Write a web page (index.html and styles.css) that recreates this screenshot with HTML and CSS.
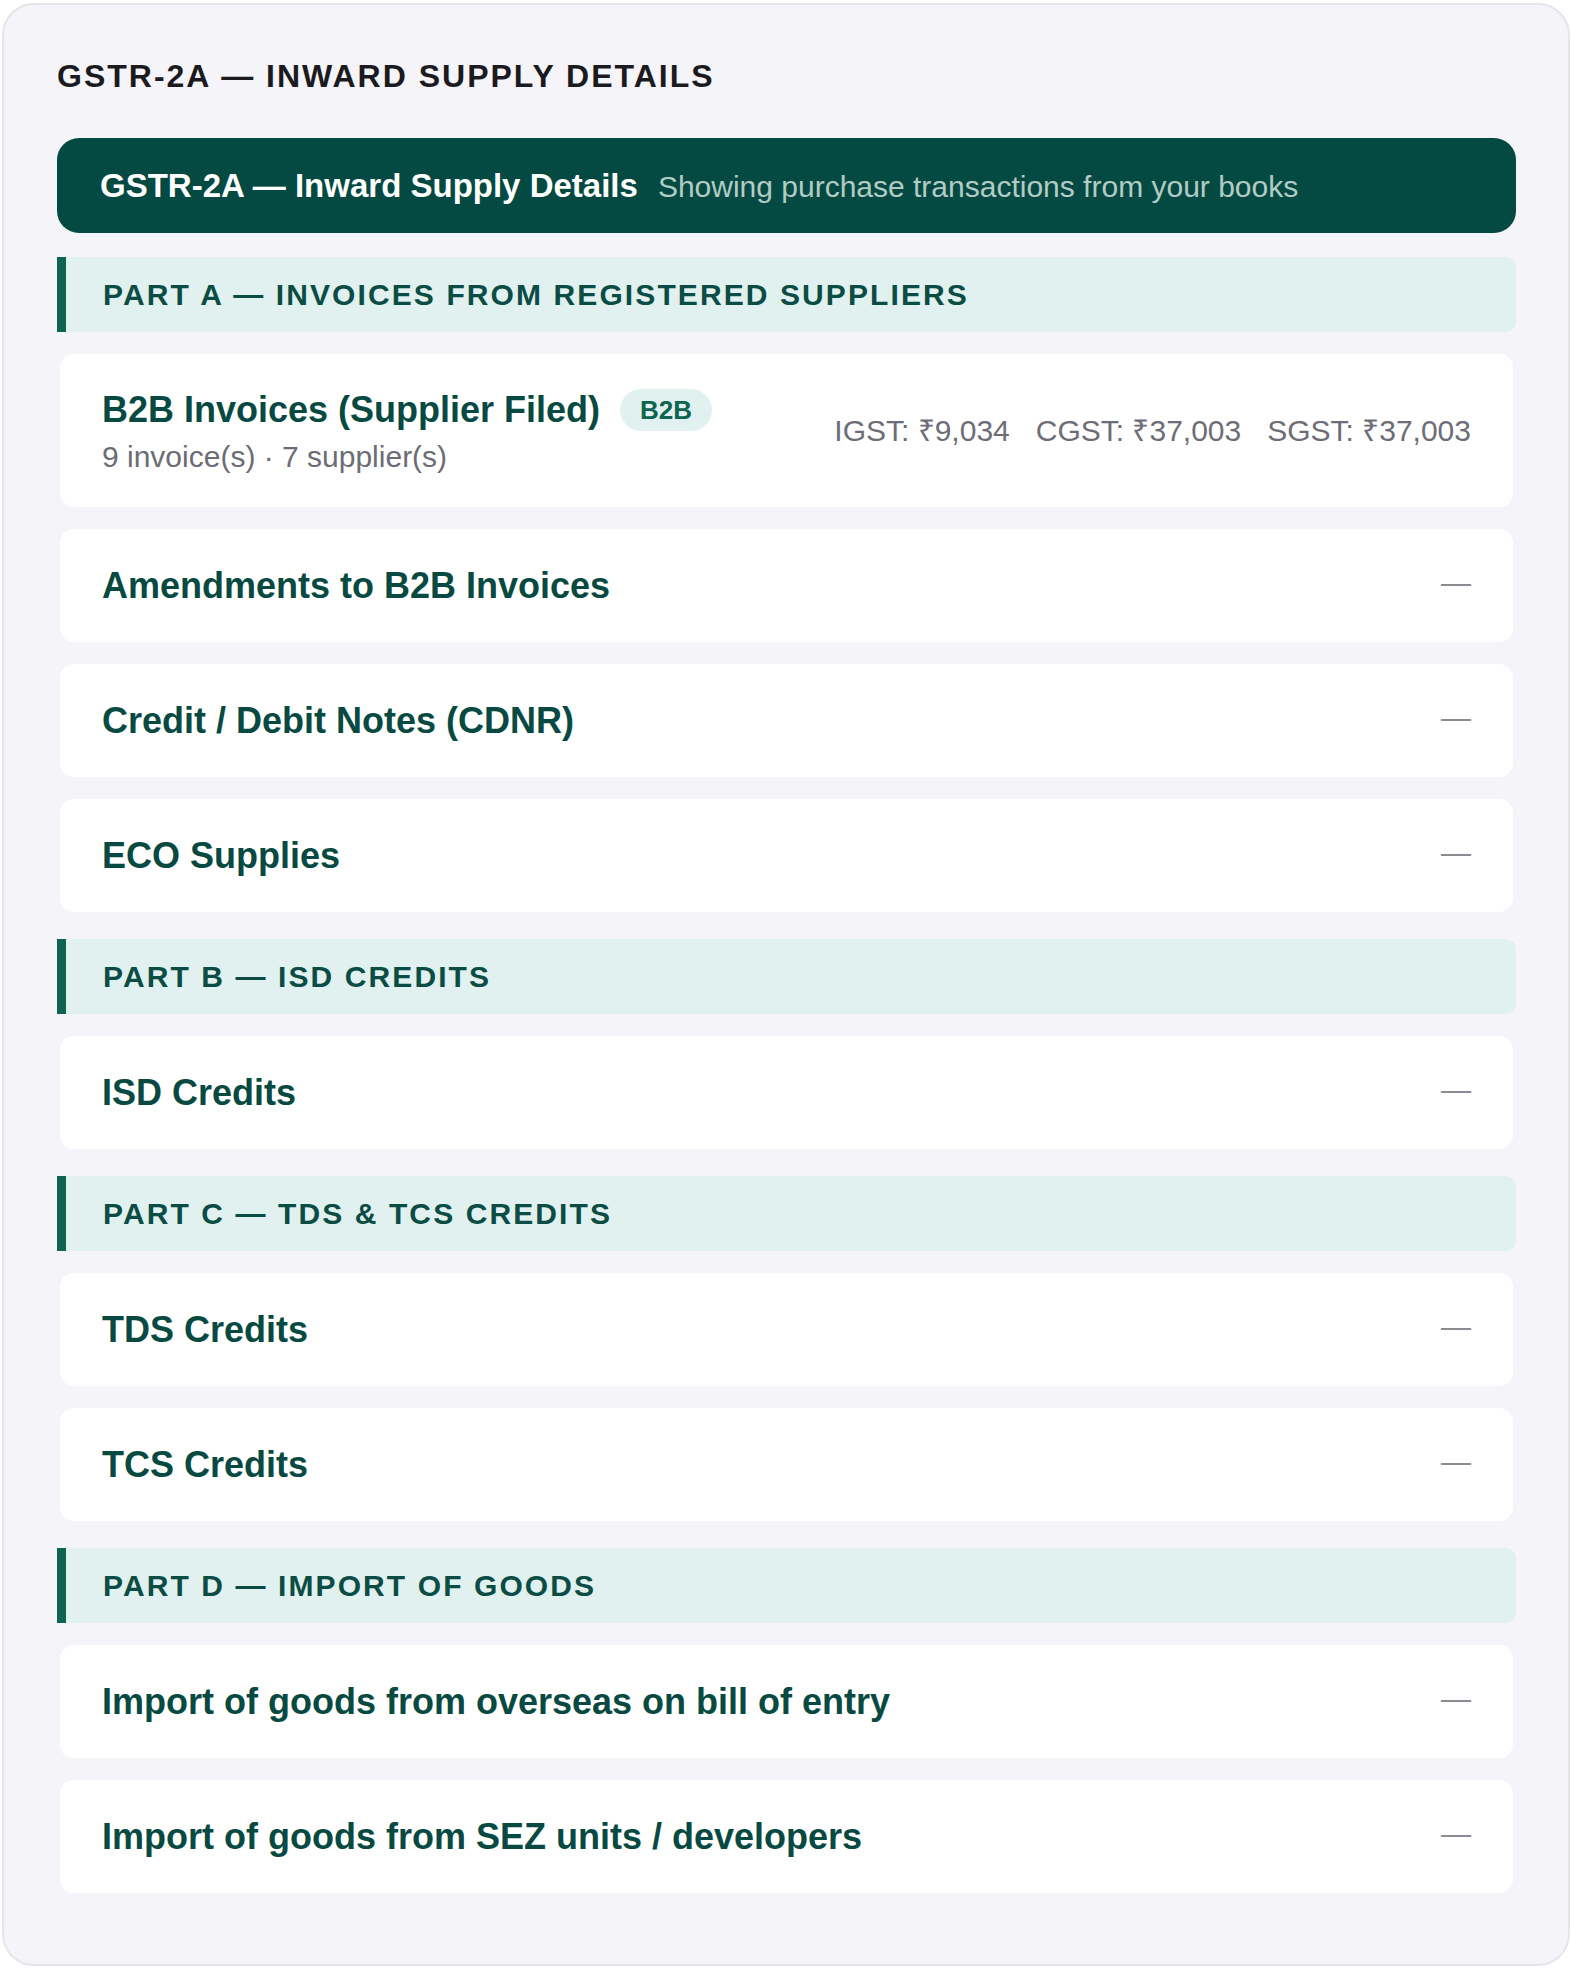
FILE: index.html
```html
<!DOCTYPE html>
<html lang="en">
<head>
<meta charset="utf-8">
<title>GSTR-2A — Inward Supply Details</title>
<link rel="stylesheet" href="styles.css">
</head>
<body>
<div class="page">
  <h1 class="page-title">GSTR-2A — INWARD SUPPLY DETAILS</h1>

  <div class="banner">
    <span class="banner-title">GSTR-2A — Inward Supply Details</span>
    <span class="banner-sub">Showing purchase transactions from your books</span>
  </div>

  <div class="list">
    <div class="section first">PART A — INVOICES FROM REGISTERED SUPPLIERS</div>

    <div class="card card-detail">
      <div class="card-main">
        <div class="title-row">
          <span class="card-title">B2B Invoices (Supplier Filed)</span>
          <span class="badge">B2B</span>
        </div>
        <div class="meta">9 invoice(s) · 7 supplier(s)</div>
      </div>
      <div class="taxes">
        <span>IGST: ₹9,034</span>
        <span>CGST: ₹37,003</span>
        <span>SGST: ₹37,003</span>
      </div>
    </div>

    <div class="card"><span class="card-title">Amendments to B2B Invoices</span><span class="dash">—</span></div>
    <div class="card"><span class="card-title">Credit / Debit Notes (CDNR)</span><span class="dash">—</span></div>
    <div class="card"><span class="card-title">ECO Supplies</span><span class="dash">—</span></div>

    <div class="section">PART B — ISD CREDITS</div>
    <div class="card"><span class="card-title">ISD Credits</span><span class="dash">—</span></div>

    <div class="section">PART C — TDS &amp; TCS CREDITS</div>
    <div class="card"><span class="card-title">TDS Credits</span><span class="dash">—</span></div>
    <div class="card"><span class="card-title">TCS Credits</span><span class="dash">—</span></div>

    <div class="section">PART D — IMPORT OF GOODS</div>
    <div class="card"><span class="card-title">Import of goods from overseas on bill of entry</span><span class="dash">—</span></div>
    <div class="card"><span class="card-title">Import of goods from SEZ units / developers</span><span class="dash">—</span></div>
  </div>
</div>
</body>
</html>
```

FILE: styles.css
```css
* { box-sizing: border-box; }

html, body {
  margin: 0;
  padding: 0;
  background: #ffffff;
}

body {
  padding: 3px 2px 2px 2px;
  font-family: "Liberation Sans", Arial, sans-serif;
}

.page {
  min-height: calc(100vh - 5px);
  background: #f5f4f8;
  border: 2px solid #e6e5ea;
  border-radius: 32px;
  padding: 52px 52px 60px 53px;
}

.page-title {
  margin: 0;
  font-size: 32px;
  line-height: 39px;
  font-weight: 700;
  letter-spacing: 2px;
  color: #1b1a20;
}

.banner {
  margin-top: 42px;
  background: #044a42;
  border-radius: 22px;
  padding: 26px 43px;
  display: flex;
  align-items: baseline;
  gap: 20px;
}

.banner-title {
  font-size: 33px;
  line-height: 43px;
  font-weight: 700;
  color: #ffffff;
}

.banner-sub {
  font-size: 30px;
  line-height: 39px;
  color: #b3cbc5;
}

.list {
  margin-top: 24px;
  display: flex;
  flex-direction: column;
  gap: 22px;
}

.section {
  margin-top: 5px;
  background: #e1f1ef;
  border-left: 9px solid #0e6450;
  border-radius: 0 10px 10px 0;
  padding: 18px 37px;
  font-size: 30px;
  line-height: 39px;
  font-weight: 700;
  letter-spacing: 2.1px;
  color: #0b4c44;
}

.section.first {
  margin-top: 0;
}

.card {
  margin: 0 3px;
  background: #ffffff;
  border-radius: 14px;
  padding: 33px 42px;
  display: flex;
  align-items: center;
  justify-content: space-between;
}

.card-title {
  font-size: 36px;
  line-height: 47px;
  font-weight: 700;
  color: #084a42;
}

.dash {
  font-size: 30px;
  line-height: 30px;
  margin-bottom: 5px;
  color: #8b8b91;
}

.card-detail {
  padding: 32px 42px 31px;
}

.title-row {
  display: flex;
  align-items: center;
  gap: 20px;
}

.badge {
  background: #e1f1ef;
  color: #0e6450;
  font-size: 26px;
  line-height: 42px;
  font-weight: 700;
  padding: 0 20px;
  border-radius: 21px;
}

.meta {
  margin-top: 4px;
  font-size: 30px;
  line-height: 39px;
  color: #6c6c76;
}

.taxes {
  display: flex;
  gap: 26px;
  font-size: 30px;
  line-height: 38px;
  color: #6d6d77;
}
```
